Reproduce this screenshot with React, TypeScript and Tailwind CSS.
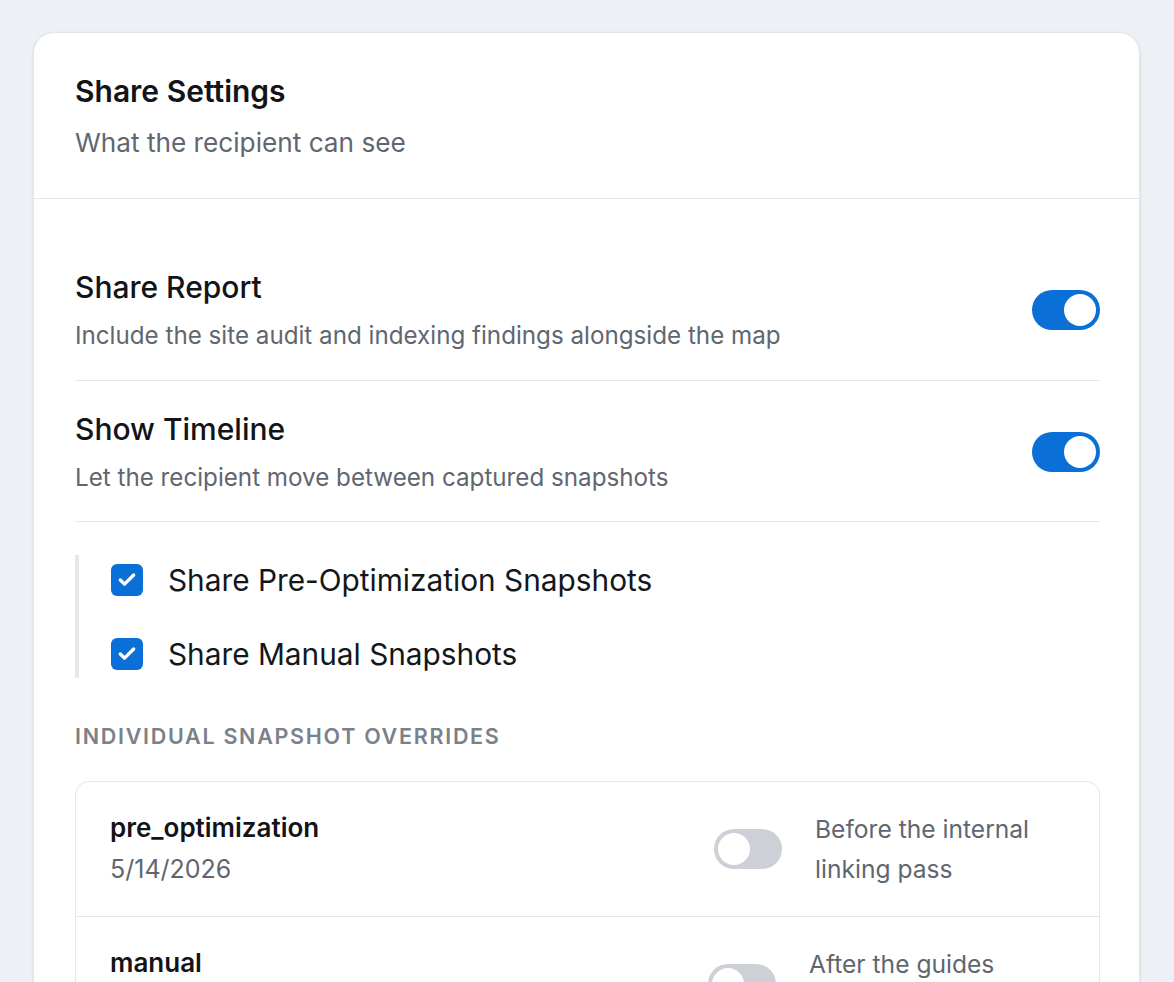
import { Check } from "lucide-react";

function Toggle({ on }: { on: boolean }) {
  return (
    <div
      className={
        on
          ? "flex h-[40px] w-[68px] shrink-0 items-center justify-end rounded-full bg-[#0a6fd6] p-[4px]"
          : "flex h-[40px] w-[68px] shrink-0 items-center justify-start rounded-full bg-[#cdd1d7] p-[4px]"
      }
    >
      <div className="h-[32px] w-[32px] rounded-full bg-white" />
    </div>
  );
}

function SettingRow({ title, desc, last }: { title: string; desc: string; last?: boolean }) {
  return (
    <div className={last ? "flex items-center justify-between pt-[28px] pb-[26px] border-b border-[#e5e7eb]" : "flex items-center justify-between pt-[30px] pb-[27px] border-b border-[#e5e7eb]"}>
      <div>
        <div className="text-[30px] leading-[40px] font-medium text-[#121417]">{title}</div>
        <div className="mt-[12px] text-[24.2px] leading-[34px] text-[#5f6670]">{desc}</div>
      </div>
      <Toggle on />
    </div>
  );
}

function CheckItem({ label }: { label: string }) {
  return (
    <div className="flex h-[40px] items-center gap-[25px]">
      <div className="flex h-[32px] w-[32px] items-center justify-center rounded-[6px] bg-[#0a6fd6]">
        <Check className="text-white" width={20} height={20} strokeWidth={4} />
      </div>
      <span className="text-[29.8px] text-[#14171a]">{label}</span>
    </div>
  );
}

function OverrideRow({ name, date, desc, descWidth, last }: { name: string; date: string; desc: string; descWidth: string; last?: boolean }) {
  return (
    <div className={last ? "flex items-center gap-[33px] px-[34px] py-[26px]" : "flex items-center gap-[33px] px-[34px] py-[26px] border-b border-[#e5e7eb]"}>
      <div className="flex-1">
        <div className="text-[26px] leading-[40px] font-semibold text-[#121417]">{name}</div>
        <div className="text-[25px] leading-[42px] text-[#5f6670]">{date}</div>
      </div>
      <Toggle on={false} />
      <div className={descWidth + " text-[24.6px] leading-[40px] text-[#5f6670]"}>{desc}</div>
    </div>
  );
}

export default function App() {
  return (
    <div className="min-h-screen bg-[#edf0f4] pt-[32px] pl-[33px] pr-[34px] font-['Inter',sans-serif]">
      <div className="rounded-t-[21px] border border-[#e1e4e9] bg-white shadow-sm">
        {/* Header */}
        <div className="border-b border-[#e1e4e9] pl-[41px] pr-[39px] pt-[37px] pb-[37px]">
          <h1 className="text-[30px] leading-[42px] font-semibold text-[#121417]">Share Settings</h1>
          <p className="mt-[13px] text-[26.2px] leading-[36px] text-[#5f6670]">What the recipient can see</p>
        </div>

        {/* Body */}
        <div className="pl-[41px] pr-[39px] pt-[38px] pb-[40px]">
          <SettingRow title="Share Report" desc="Include the site audit and indexing findings alongside the map" />
          <SettingRow title="Show Timeline" desc="Let the recipient move between captured snapshots" last />

          <div className="mt-[33px] flex flex-col gap-[34px] border-l-[4px] border-[#e5e7eb] pt-[5px] pb-[4px] pl-[32px]">
            <CheckItem label="Share Pre-Optimization Snapshots" />
            <CheckItem label="Share Manual Snapshots" />
          </div>

          <div className="mt-[42px] text-[21.5px] leading-[32px] font-semibold uppercase tracking-[0.08em] text-[#7b8189]">
            Individual snapshot overrides
          </div>

          <div className="mt-[29px] rounded-[14px] border border-[#e5e7eb]">
            <OverrideRow name="pre_optimization" date="5/14/2026" desc="Before the internal linking pass" descWidth="w-[250px]" />
            <OverrideRow name="manual" date="5/18/2026" desc="After the guides cluster was linked" descWidth="w-[256px]" last />
          </div>
        </div>
      </div>
    </div>
  );
}
